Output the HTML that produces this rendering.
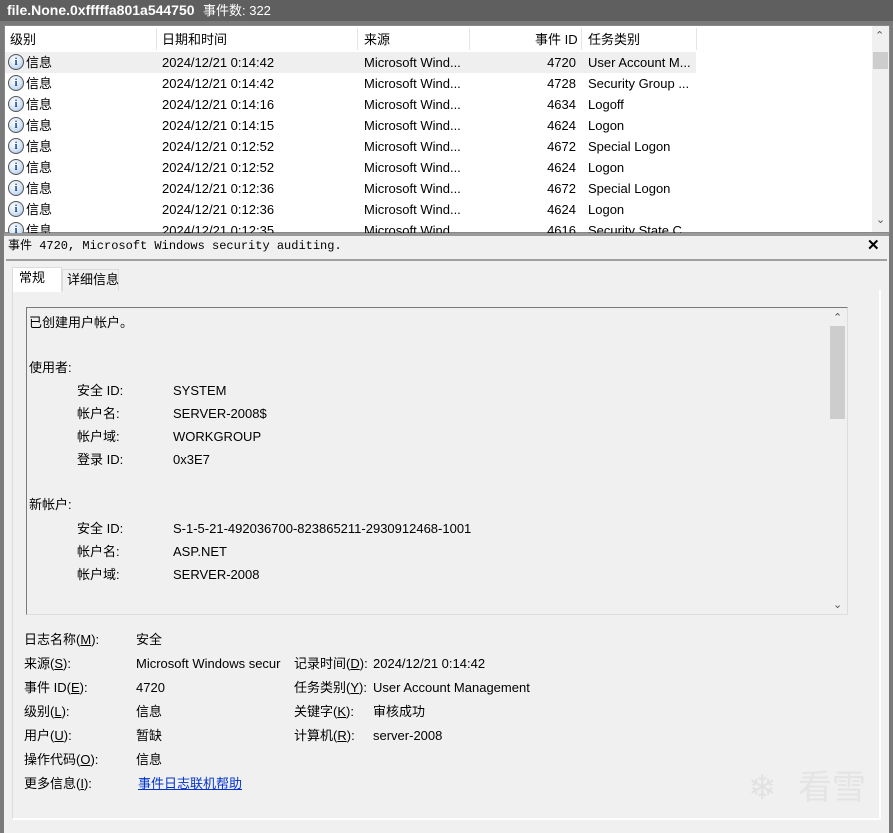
<!DOCTYPE html>
<html><head><meta charset="utf-8"><style>
*{margin:0;padding:0;box-sizing:border-box}
body{width:893px;height:833px;background:#f0f0f0;font-family:"Liberation Sans","Noto Sans CJK SC",sans-serif;font-size:13px;line-height:17px;color:#000;position:relative;overflow:hidden}
.a{position:absolute;white-space:nowrap;line-height:17px}
.row{position:absolute;left:6px;width:866px;height:21px}
.row span{position:absolute;top:2px;line-height:17px}
.ic{position:absolute;left:2px;top:2px;width:16px;height:16px;border-radius:50%;border:1px solid #555;background:radial-gradient(circle at 40% 35%,#fff,#cfe0f5 60%,#7fa8d8);color:#1a4fa0;font:bold 11px/14px "Liberation Serif",serif;text-align:center}
.mono{font-family:"Liberation Mono","Noto Sans CJK SC",monospace;font-size:12px}
u{text-decoration:underline}
</style></head><body>
<div class="a" style="left:0;top:0;width:893px;height:21px;background:#5f5f5f"></div>
<div class="a" style="left:7px;top:2px;color:#fff;font-weight:bold;font-size:14px">file.None.0xfffffa801a544750</div>
<div class="a" style="left:203px;top:2px;color:#fff;font-size:13px">事件数: 322</div>
<div class="a" style="left:0;top:21px;width:4px;height:812px;background:#7a7a7a"></div>
<div class="a" style="left:889px;top:21px;width:4px;height:812px;background:#7a7a7a"></div>
<div class="a" style="left:0;top:21px;width:893px;height:4px;background:#7a7a7a"></div>
<div class="a" style="left:4px;top:25px;width:886px;height:208px;background:#fff;border:1px solid #888;overflow:hidden">
<div class="a" style="left:151px;top:2px;width:1px;height:22px;background:#e5e5e5"></div>
<div class="a" style="left:352px;top:2px;width:1px;height:22px;background:#e5e5e5"></div>
<div class="a" style="left:464px;top:2px;width:1px;height:22px;background:#e5e5e5"></div>
<div class="a" style="left:576px;top:2px;width:1px;height:22px;background:#e5e5e5"></div>
<div class="a" style="left:691px;top:2px;width:1px;height:22px;background:#e5e5e5"></div>
<div class="a" style="left:5px;top:5px">级别</div>
<div class="a" style="left:157px;top:5px">日期和时间</div>
<div class="a" style="left:359px;top:5px">来源</div>
<div class="a" style="left:530px;top:5px">事件 ID</div>
<div class="a" style="left:583px;top:5px">任务类别</div>
<div class="a" style="left:0;top:26px;width:691px;height:21px;background:#efefef"></div>
<div class="a" style="left:867px;top:0;width:17px;height:206px;background:#f0f0f0"></div>
<div class="a" style="left:870px;top:2px;color:#555;font-size:11px">&#8963;</div>
<div class="a" style="left:868px;top:26px;width:15px;height:17px;background:#cdcdcd"></div>
<div class="a" style="left:871px;top:186px;color:#555;font-size:11px">&#8964;</div>
</div>
<div id="rows"></div>
<div class="a" style="left:4px;top:233px;width:885px;height:3px;background:#9a9a9a"></div>
<div class="a mono" style="left:8px;top:238px">事件 4720, Microsoft Windows security auditing.</div>
<div class="a" style="left:867px;top:237px;font-size:15px;font-weight:bold">✕</div>
<div class="a" style="left:6px;top:259px;width:881px;height:2px;background:#a0a0a0"></div>
<div class="a" style="left:12px;top:267px;width:50px;height:25px;background:#fff;border:1px solid #dcdcdc;border-bottom:none"></div>
<div class="a" style="left:19px;top:269px">常规</div>
<div class="a" style="left:62px;top:269px;width:57px;height:22px;background:#f0f0f0;border:1px solid #dcdcdc;border-bottom:none"></div>
<div class="a" style="left:67px;top:271px">详细信息</div>
<div class="a" style="left:12px;top:290px;width:869px;height:530px;border:1px solid #dcdcdc;border-top:none;border-bottom:2px solid #fff;border-right:2px solid #fff"></div>
<div class="a" style="left:26px;top:307px;width:822px;height:308px;border:1px solid #7a7a7a;border-right-color:#ddd;border-bottom-color:#ddd;background:#f0f0f0"></div>
<div class="a" style="left:829px;top:309px;width:17px;height:305px;background:#f0f0f0"></div>
<div class="a" style="left:833px;top:310px;color:#555;font-size:11px">&#8963;</div>
<div class="a" style="left:830px;top:326px;width:15px;height:93px;background:#cdcdcd"></div>
<div class="a" style="left:833px;top:597px;color:#555;font-size:11px">&#8964;</div>
<div class="a" style="left:29px;top:314px">已创建用户帐户。</div>
<div class="a" style="left:29px;top:359px">使用者:</div>
<div class="a" style="left:77px;top:382px">安全 ID:</div><div class="a" style="left:173px;top:382px">SYSTEM</div>
<div class="a" style="left:77px;top:405px">帐户名:</div><div class="a" style="left:173px;top:405px">SERVER-2008$</div>
<div class="a" style="left:77px;top:428px">帐户域:</div><div class="a" style="left:173px;top:428px">WORKGROUP</div>
<div class="a" style="left:77px;top:451px">登录 ID:</div><div class="a" style="left:173px;top:451px">0x3E7</div>
<div class="a" style="left:29px;top:496px">新帐户:</div>
<div class="a" style="left:77px;top:520px">安全 ID:</div><div class="a" style="left:173px;top:520px">S-1-5-21-492036700-823865211-2930912468-1001</div>
<div class="a" style="left:77px;top:543px">帐户名:</div><div class="a" style="left:173px;top:543px">ASP.NET</div>
<div class="a" style="left:77px;top:566px">帐户域:</div><div class="a" style="left:173px;top:566px">SERVER-2008</div>
<div class="a" style="left:24px;top:631px">日志名称(<u>M</u>):</div><div class="a" style="left:136px;top:631px">安全</div>
<div class="a" style="left:24px;top:655px">来源(<u>S</u>):</div><div class="a" style="left:136px;top:655px">Microsoft Windows secur</div>
<div class="a" style="left:294px;top:655px">记录时间(<u>D</u>):</div><div class="a" style="left:373px;top:655px">2024/12/21 0:14:42</div>
<div class="a" style="left:24px;top:679px">事件 ID(<u>E</u>):</div><div class="a" style="left:136px;top:679px">4720</div>
<div class="a" style="left:294px;top:679px">任务类别(<u>Y</u>):</div><div class="a" style="left:373px;top:679px">User Account Management</div>
<div class="a" style="left:24px;top:703px">级别(<u>L</u>):</div><div class="a" style="left:136px;top:703px">信息</div>
<div class="a" style="left:294px;top:703px">关键字(<u>K</u>):</div><div class="a" style="left:373px;top:703px">审核成功</div>
<div class="a" style="left:24px;top:727px">用户(<u>U</u>):</div><div class="a" style="left:136px;top:727px">暂缺</div>
<div class="a" style="left:294px;top:727px">计算机(<u>R</u>):</div><div class="a" style="left:373px;top:727px">server-2008</div>
<div class="a" style="left:24px;top:751px">操作代码(<u>O</u>):</div><div class="a" style="left:136px;top:751px">信息</div>
<div class="a" style="left:24px;top:775px">更多信息(<u>I</u>):</div><div class="a" style="left:138px;top:775px;color:#0033cc;text-decoration:underline">事件日志联机帮助</div>
<div class="a" style="left:748px;top:770px;font-size:34px;line-height:36px;color:#e2e2e2">❄</div>
<div class="a" style="left:798px;top:768px;font-size:34px;line-height:40px;color:#e4e4e4">看雪</div>
<script>
var d=[["2024/12/21 0:14:42","4720","User Account M..."],["2024/12/21 0:14:42","4728","Security Group ..."],["2024/12/21 0:14:16","4634","Logoff"],["2024/12/21 0:14:15","4624","Logon"],["2024/12/21 0:12:52","4672","Special Logon"],["2024/12/21 0:12:52","4624","Logon"],["2024/12/21 0:12:36","4672","Special Logon"],["2024/12/21 0:12:36","4624","Logon"],["2024/12/21 0:12:35","4616","Security State C..."]];
var h="";d.forEach(function(r,i){var t=52+i*21;var hh=i==8?(233-t):21;h+='<div class="row" style="top:'+t+'px;height:'+hh+'px;overflow:hidden"><div class="ic">i</div><span style="left:20px">信息</span><span style="left:156px">'+r[0]+'</span><span style="left:358px">Microsoft Wind...</span><span style="left:470px;width:100px;text-align:right">'+r[1]+'</span><span style="left:582px">'+r[2]+'</span></div>';});
document.getElementById("rows").outerHTML=h;
</script>
</body></html>
